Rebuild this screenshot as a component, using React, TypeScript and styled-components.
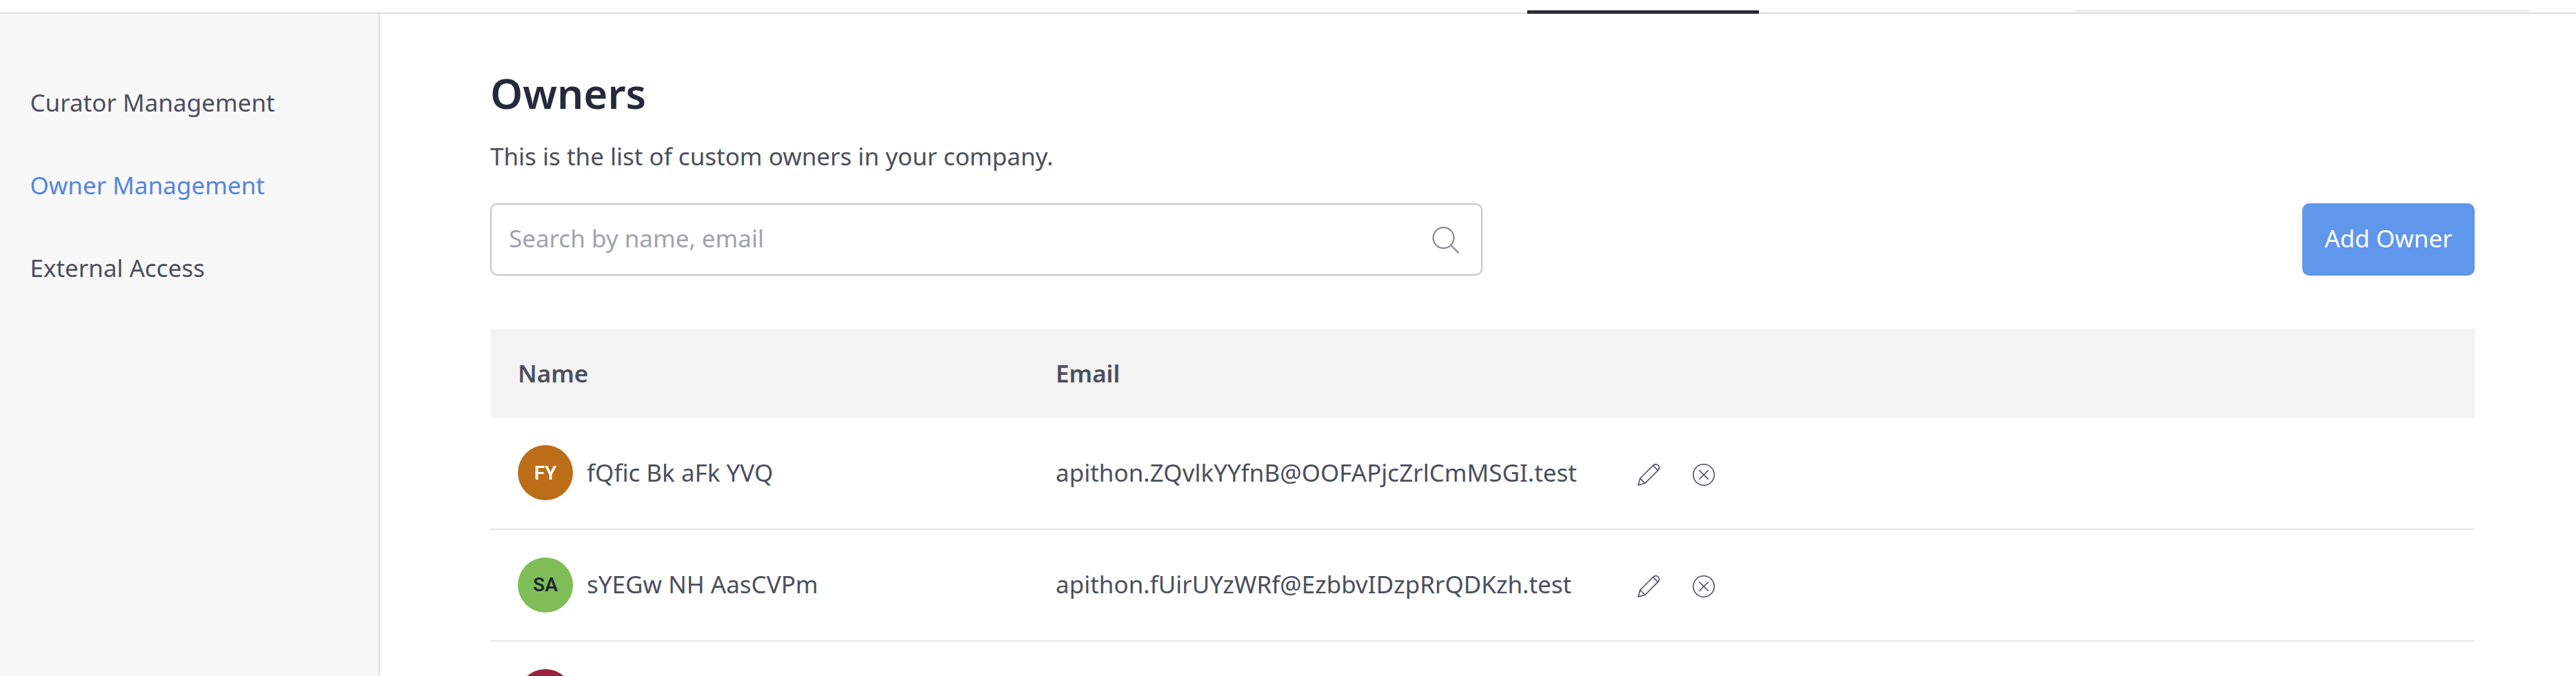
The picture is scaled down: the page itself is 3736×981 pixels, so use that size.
import React from "react";
import styled, { createGlobalStyle } from "styled-components";

const GlobalStyle = createGlobalStyle`
  *, *::before, *::after { box-sizing: border-box; }
  body {
    margin: 0;
    overflow: hidden;
    background: #fff;
    color: #4b4f5d;
    font-family: "Noto Sans", sans-serif;
    font-size: 35px;
    line-height: 47px;
  }
`;

const Page = styled.div`
  display: flex;
  flex-direction: column;
  height: 981px;
  overflow: hidden;
`;

const TopBar = styled.header`
  display: flex;
  align-items: flex-start;
  flex: none;
  height: 20px;
  padding: 15px 67px 0 2215px;
  box-shadow: inset 0 -2px #dcdcdd;
`;

const ActiveTab = styled.div`
  width: 336px;
  height: 5px;
  background: #242a3a;
`;

const TopField = styled.div`
  width: 660px;
  height: 2px;
  margin-left: auto;
  background: #e6e6e7;
`;

const Body = styled.div`
  display: flex;
  flex: 1;
  min-height: 0;
`;

const Sidebar = styled.nav`
  flex: none;
  width: 551px;
  padding: 68px 0 0 43.5px;
  background: #f8f8f8;
  border-right: 2px solid #dcdcdd;
`;

const NavLink = styled.a<{ $active?: boolean }>`
  display: flex;
  align-items: center;
  height: 120px;
  padding-top: 1px;
  color: ${(p) => (p.$active ? "#5486db" : "#4b4f5d")};
`;

const Main = styled.main`
  flex: 1;
  padding: 75px 147px 0 160px;
`;

const Title = styled.h1`
  margin: 0;
  color: #242a3a;
  font-size: 60px;
  font-weight: 600;
  line-height: 80px;
`;

const Description = styled.p`
  margin: 28px 0 0;
`;

const Toolbar = styled.div`
  display: flex;
  justify-content: space-between;
  height: 105px;
  margin-top: 45px;
`;

const SearchBox = styled.label`
  display: flex;
  align-items: center;
  width: 1439px;
  padding: 0 32px 0 25px;
  border: 2px solid #c3c3ca;
  border-radius: 10px;
`;

const SearchInput = styled.input`
  flex: 1;
  height: 51px;
  padding: 0 0 4px;
  border: 0;
  outline: 0;
  background: transparent;
  color: inherit;
  font: inherit;
  &::placeholder {
    color: #a0a3ab;
    opacity: 1;
  }
`;

const AddButton = styled.button`
  width: 250px;
  padding: 0 0 4px;
  border: 0;
  border-radius: 10px;
  background: #6197ea;
  color: #fff;
  font: inherit;
`;

const Table = styled.div`
  margin-top: 77px;
`;

const HeadRow = styled.div`
  display: grid;
  grid-template-columns: 780px 840px 1fr;
  align-items: center;
  height: 129px;
  padding-left: 40px;
  background: #f3f3f3;
  font-weight: 600;
`;

const Row = styled.div`
  display: grid;
  grid-template-columns: 780px 840px 1fr;
  align-items: center;
  height: 162.5px;
  padding-left: 40px;
  border-bottom: 2px solid #e6e6e7;
`;

const Person = styled.div`
  display: flex;
  align-items: center;
  gap: 20px;
`;

const Avatar = styled.div<{ $bg: string; $fg: string }>`
  display: flex;
  align-items: center;
  justify-content: center;
  width: 80px;
  height: 80px;
  padding-top: 1px;
  border-radius: 50%;
  background: ${(p) => p.$bg};
  color: ${(p) => p.$fg};
  font: 600 28px/34px Roboto, sans-serif;
`;

const CellText = styled.span`
  padding-bottom: 2px;
`;

const Actions = styled.div`
  display: flex;
  gap: 40px;
  padding-top: 5px;
`;

const IconButton = styled.button`
  display: flex;
  align-items: center;
  justify-content: center;
  width: 40px;
  height: 40px;
  padding: 0;
  border: 0;
  background: none;
  color: #4b4f5d;
`;

const SearchIcon = () => (
  <svg width="40" height="40" viewBox="0 0 40 40" fill="none" stroke="#868a95" strokeWidth="2.2" strokeLinecap="round">
    <circle cx="17.6" cy="17.2" r="15" />
    <path d="M28.2 27.8 39 38.6" />
  </svg>
);

const PencilIcon = () => (
  <svg width="32" height="32" viewBox="0 0 32 32" fill="none" stroke="currentColor" strokeWidth="1.6" strokeLinejoin="round" strokeLinecap="round">
    <path d="M.9 31.1 3.7 21.2 22.4 2.5C25 .1 27.8.2 29.8 2.2S31.9 7 29.5 9.6L10.8 28.3Z" />
    <path d="M22.4 2.5 29.5 9.6M3.7 21.2 10.8 28.3" />
  </svg>
);

const RemoveIcon = () => (
  <svg width="32" height="32" viewBox="0 0 32 32" fill="none" stroke="currentColor" strokeWidth="1.6" strokeLinecap="round">
    <circle cx="16" cy="16" r="15.2" />
    <path d="M9.7 9.7 22.3 22.3M22.3 9.7 9.7 22.3" />
  </svg>
);

const owners = [
  { initials: "FY", name: "fQfic Bk aFk YVQ", email: "apithon.ZQvlkYYfnB@OOFAPjcZrlCmMSGI.test", bg: "#bc6d18", fg: "#fff" },
  { initials: "SA", name: "sYEGw NH AasCVPm", email: "apithon.fUirUYzWRf@EzbbvIDzpRrQDKzh.test", bg: "#7fbd56", fg: "#1d2630" },
  { initials: "", name: "", email: "", bg: "#99243f", fg: "#fff" },
];

export default function App() {
  return (
    <>
      <GlobalStyle />
      <Page>
        <TopBar>
          <ActiveTab />
          <TopField />
        </TopBar>
        <Body>
          <Sidebar>
            <NavLink>Curator Management</NavLink>
            <NavLink $active>Owner Management</NavLink>
            <NavLink>External Access</NavLink>
          </Sidebar>
          <Main>
            <Title>Owners</Title>
            <Description>This is the list of custom owners in your company.</Description>
            <Toolbar>
              <SearchBox>
                <SearchInput placeholder="Search by name, email" />
                <SearchIcon />
              </SearchBox>
              <AddButton>Add Owner</AddButton>
            </Toolbar>
            <Table>
              <HeadRow>
                <span>Name</span>
                <span>Email</span>
              </HeadRow>
              {owners.map((o) => (
                <Row key={o.bg}>
                  <Person>
                    <Avatar $bg={o.bg} $fg={o.fg}>{o.initials}</Avatar>
                    <CellText>{o.name}</CellText>
                  </Person>
                  <CellText>{o.email}</CellText>
                  {o.email && (
                    <Actions>
                      <IconButton aria-label="Edit"><PencilIcon /></IconButton>
                      <IconButton aria-label="Remove"><RemoveIcon /></IconButton>
                    </Actions>
                  )}
                </Row>
              ))}
            </Table>
          </Main>
        </Body>
      </Page>
    </>
  );
}
